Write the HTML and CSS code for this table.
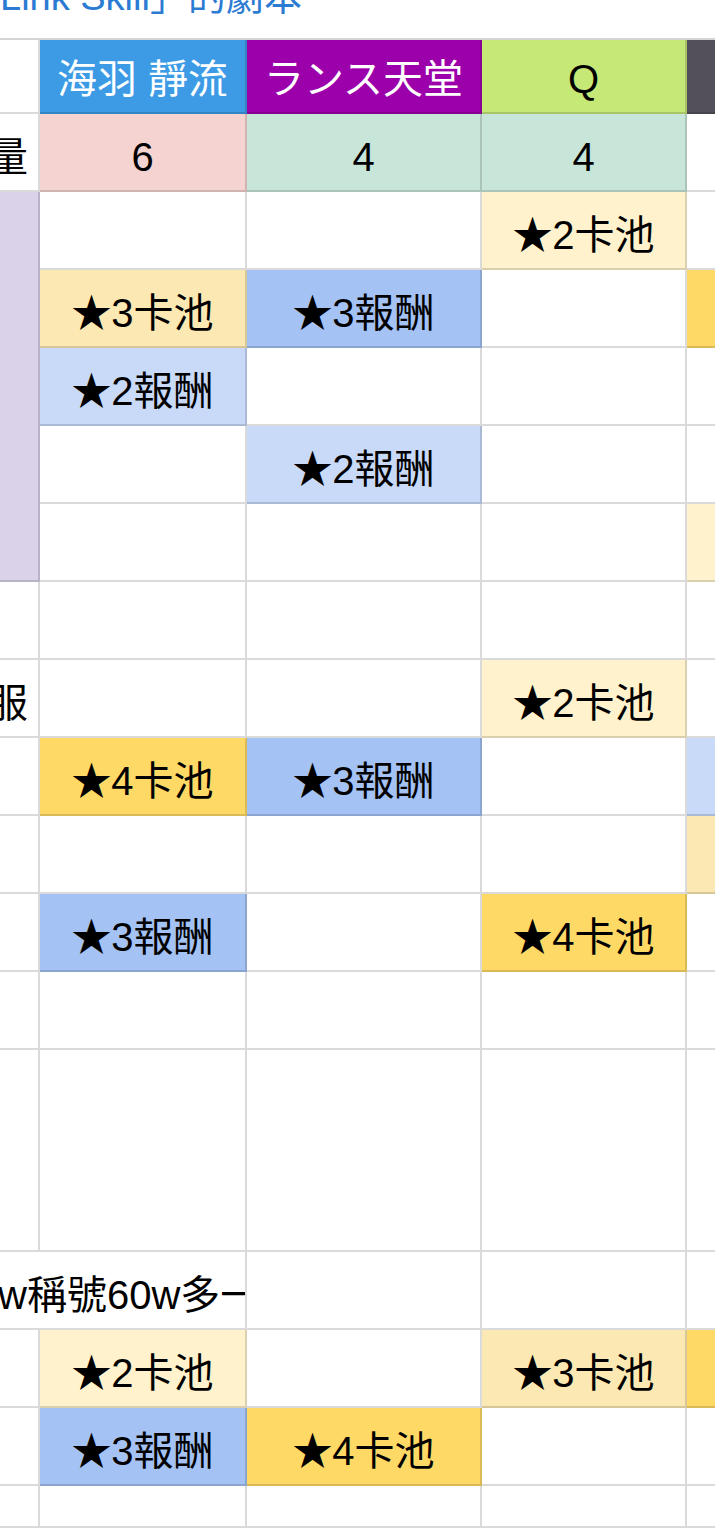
FILE: index.html
```html
<!DOCTYPE html>
<html lang="zh-Hant">
<head>
  <meta charset="UTF-8" />
  <meta name="viewport" content="width=device-width, initial-scale=1.0"/>
  <title>Link Skill 劇本</title>
  <link rel="stylesheet" href="styles.css">
</head>
<body>

<div class="title"><span class="title-text">Link Skill」的劇本</span></div>

<div class="sheet-wrap">
  <div class="sheet">
    <!-- header -->
    <div class="cell"></div>
    <div class="cell head blue">海羽 靜流</div>
    <div class="cell head purple">ランス天堂</div>
    <div class="cell head green">Q</div>
    <div class="cell head dark"></div>

    <!-- count -->
    <div class="cell label">數量</div>
    <div class="cell pink">6</div>
    <div class="cell teal">4</div>
    <div class="cell teal">4</div>
    <div class="cell"></div>

    <div class="cell lavender"></div>
    <div class="cell"></div>
    <div class="cell"></div>
    <div class="cell pool2">★2卡池</div>
    <div class="cell"></div>

    <div class="cell pool3">★3卡池</div>
    <div class="cell reward3">★3報酬</div>
    <div class="cell"></div>
    <div class="cell pool4">★4卡池</div>

    <div class="cell reward2">★2報酬</div>
    <div class="cell"></div>
    <div class="cell"></div>
    <div class="cell"></div>

    <div class="cell"></div>
    <div class="cell reward2">★2報酬</div>
    <div class="cell"></div>
    <div class="cell"></div>

    <div class="cell"></div>
    <div class="cell"></div>
    <div class="cell"></div>
    <div class="cell pool2">★2卡池</div>

    <div class="cell"></div>
    <div class="cell"></div>
    <div class="cell"></div>
    <div class="cell"></div>
    <div class="cell"></div>

    <div class="cell label">衣服</div>
    <div class="cell"></div>
    <div class="cell"></div>
    <div class="cell pool2">★2卡池</div>
    <div class="cell"></div>

    <div class="cell"></div>
    <div class="cell pool4">★4卡池</div>
    <div class="cell reward3">★3報酬</div>
    <div class="cell"></div>
    <div class="cell reward2">★2報酬</div>

    <div class="cell"></div>
    <div class="cell"></div>
    <div class="cell"></div>
    <div class="cell"></div>
    <div class="cell pool3">★3卡池</div>

    <div class="cell"></div>
    <div class="cell reward3">★3報酬</div>
    <div class="cell"></div>
    <div class="cell pool4">★4卡池</div>
    <div class="cell"></div>

    <div class="cell"></div>
    <div class="cell"></div>
    <div class="cell"></div>
    <div class="cell"></div>
    <div class="cell"></div>

    <!-- tall row -->
    <div class="cell"></div>
    <div class="cell"></div>
    <div class="cell"></div>
    <div class="cell"></div>
    <div class="cell"></div>

    <div class="cell spill"><span class="spill-text">w稱號60w多一</span></div>
    <div class="cell"></div>
    <div class="cell"></div>
    <div class="cell"></div>

    <div class="cell"></div>
    <div class="cell pool2">★2卡池</div>
    <div class="cell"></div>
    <div class="cell pool3">★3卡池</div>
    <div class="cell pool4">★4卡池</div>

    <div class="cell"></div>
    <div class="cell reward3">★3報酬</div>
    <div class="cell pool4">★4卡池</div>
    <div class="cell"></div>
    <div class="cell"></div>

    <div class="cell"></div>
    <div class="cell"></div>
    <div class="cell"></div>
    <div class="cell"></div>
    <div class="cell"></div>
  </div>
</div>

</body>
</html>
```

FILE: styles.css
```css
body {
  margin: 0;
  font-family: "Liberation Sans", "Noto Sans CJK TC", sans-serif;
  background: #fff;
  color: #000;
  overflow: hidden;
}
.title {
  height: 38px;
  overflow: hidden;
  color: #2c7bd3;
  font-size: 38px;
  white-space: nowrap;
}
.title-text {
  display: block;
  line-height: 38px;
  margin-top: -22px;
}
.sheet-wrap {
  overflow: hidden;
  border-top: 2px solid #d4d4d4;
}
.sheet {
  display: grid;
  grid-template-columns: 40px 207px 235px 205px 205px;
  grid-template-rows: 74px repeat(12, 78px) 202px repeat(3, 78px) 42px;
  font-size: 40px;
}
.cell {
  box-sizing: border-box;
  display: flex;
  align-items: flex-end;
  justify-content: center;
  padding-bottom: 13px;
  line-height: 40px;
  border-right: 2px solid rgba(0, 0, 0, 0.145);
  border-bottom: 2px solid rgba(0, 0, 0, 0.145);
  white-space: nowrap;
  overflow: hidden;
  min-width: 0;
}
.label {
  justify-content: flex-end;
  padding-right: 10px;
}
.spill {
  grid-column: span 2;
  justify-content: flex-start;
}
.spill-text { margin-left: -2px; }

.head { color: #fff; }
.blue { background: #3d9be6; }
.purple { background: #9c00aa; }
.green { background: #c5e877; color: #000; }
.dark { background: #534f5b; }

.pink { background: #f4d3d1; }
.teal { background: #c7e6d9; }
.lavender {
  grid-row: span 5;
  background: #d9d2e9;
}

.pool2 { background: #fff2cc; }
.pool3 { background: #fce8b2; }
.pool4 { background: #ffd966; }
.reward2 { background: #c9daf8; }
.reward3 { background: #a4c2f4; }
```
